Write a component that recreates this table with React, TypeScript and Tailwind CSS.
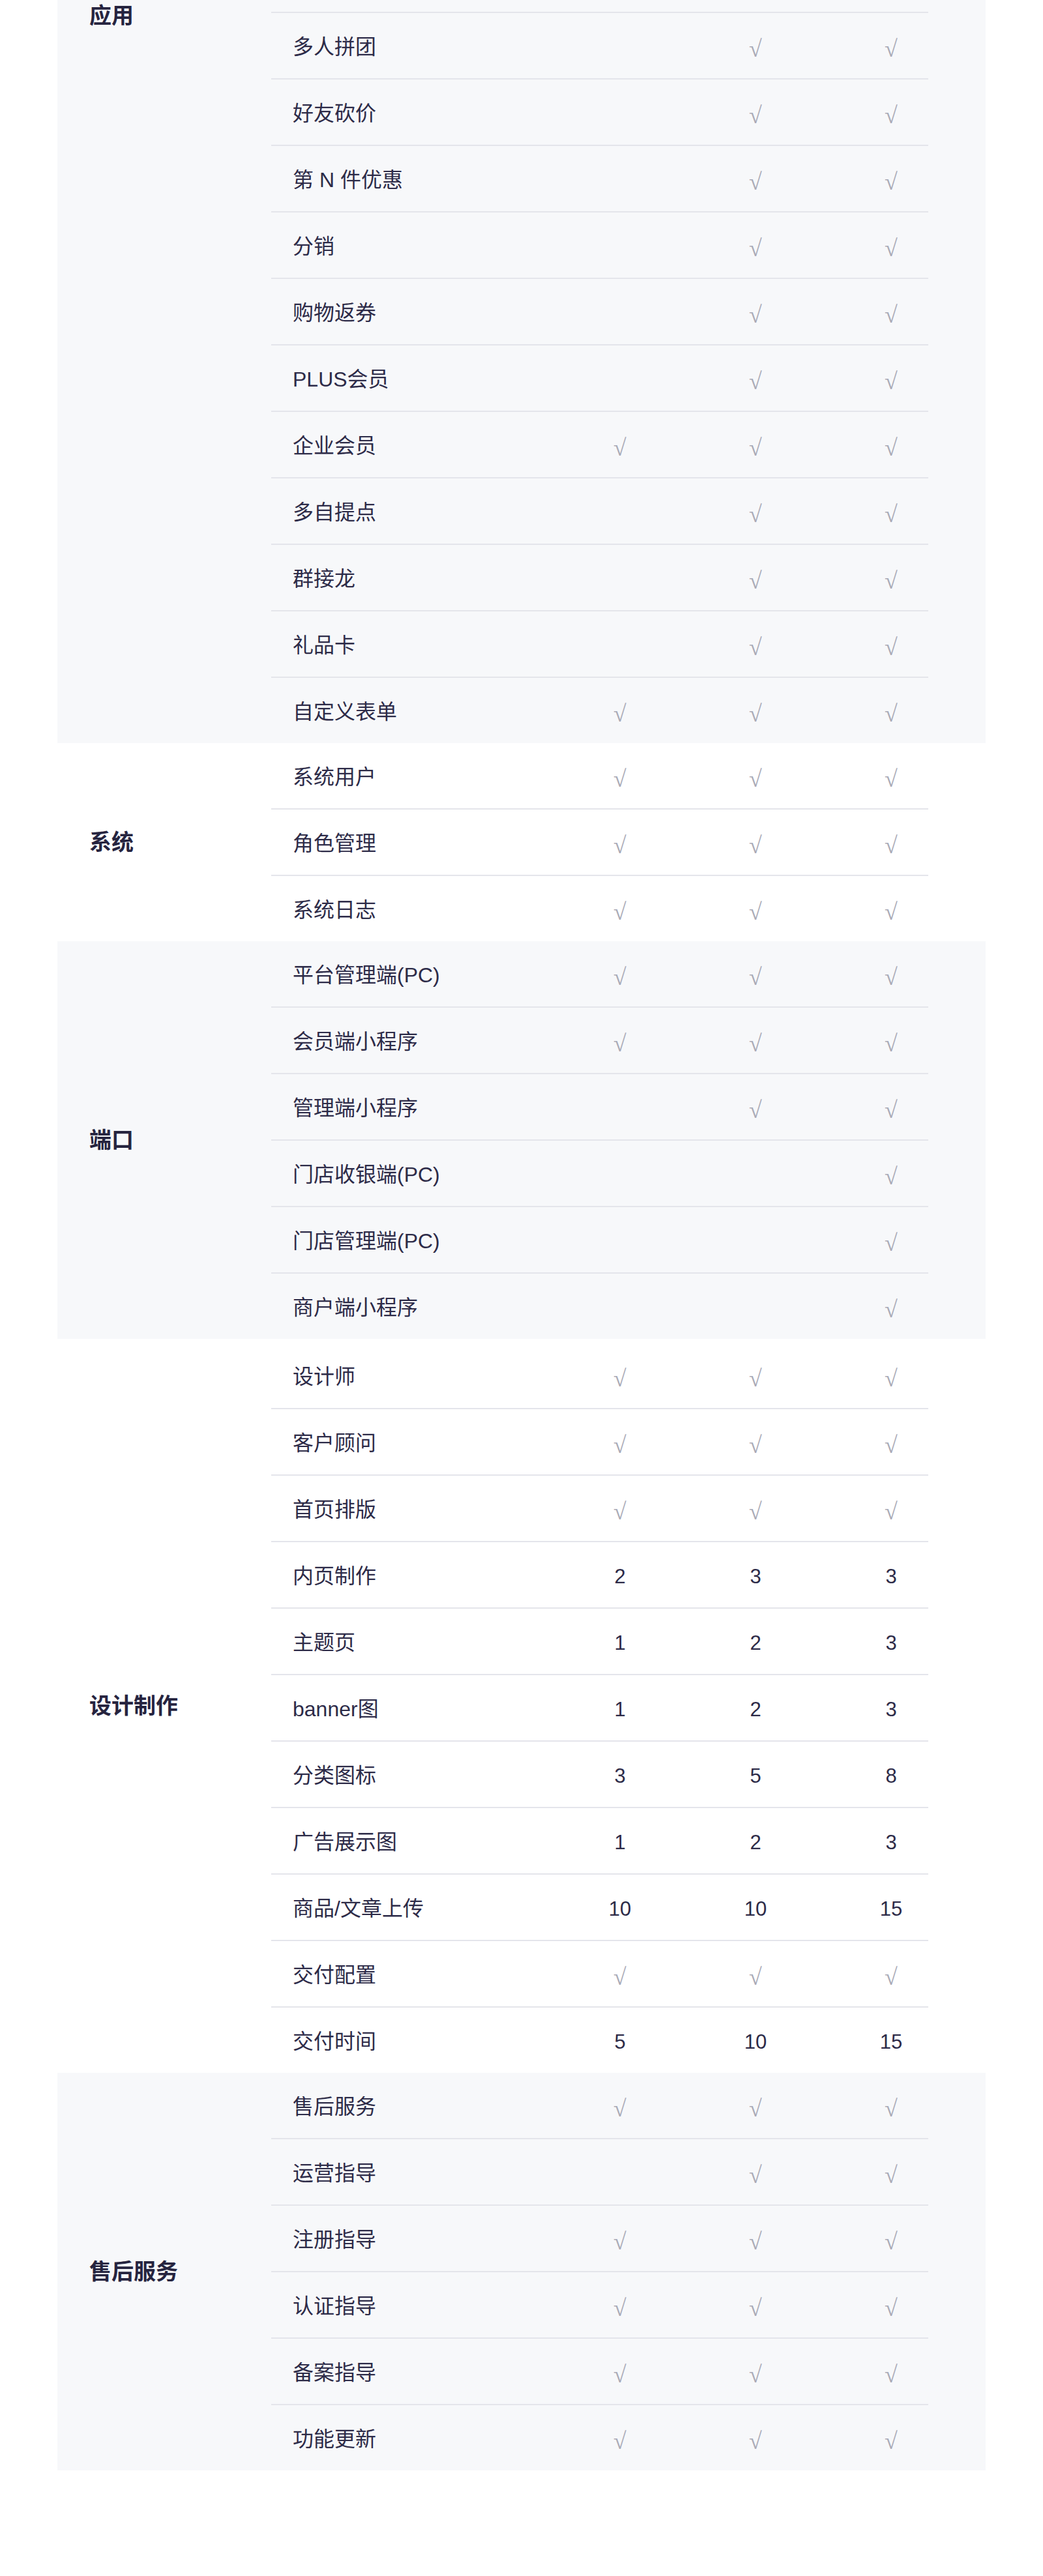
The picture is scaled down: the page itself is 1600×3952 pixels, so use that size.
import clsx from 'clsx';

type Row = { name: string; v: [string, string, string] };
type Group = { title: string; shaded: boolean; rows: Row[]; cut?: boolean; padTop?: boolean };

const Y = '√';
const N = '';

const groups: Group[] = [
  {
    title: '应用',
    shaded: true,
    cut: true,
    rows: [
      { name: '多人拼团', v: [N, Y, Y] },
      { name: '好友砍价', v: [N, Y, Y] },
      { name: '第 N 件优惠', v: [N, Y, Y] },
      { name: '分销', v: [N, Y, Y] },
      { name: '购物返券', v: [N, Y, Y] },
      { name: 'PLUS会员', v: [N, Y, Y] },
      { name: '企业会员', v: [Y, Y, Y] },
      { name: '多自提点', v: [N, Y, Y] },
      { name: '群接龙', v: [N, Y, Y] },
      { name: '礼品卡', v: [N, Y, Y] },
      { name: '自定义表单', v: [Y, Y, Y] },
    ],
  },
  {
    title: '系统',
    shaded: false,
    rows: [
      { name: '系统用户', v: [Y, Y, Y] },
      { name: '角色管理', v: [Y, Y, Y] },
      { name: '系统日志', v: [Y, Y, Y] },
    ],
  },
  {
    title: '端口',
    shaded: true,
    rows: [
      { name: '平台管理端(PC)', v: [Y, Y, Y] },
      { name: '会员端小程序', v: [Y, Y, Y] },
      { name: '管理端小程序', v: [N, Y, Y] },
      { name: '门店收银端(PC)', v: [N, N, Y] },
      { name: '门店管理端(PC)', v: [N, N, Y] },
      { name: '商户端小程序', v: [N, N, Y] },
    ],
  },
  {
    title: '设计制作',
    shaded: false,
    padTop: true,
    rows: [
      { name: '设计师', v: [Y, Y, Y] },
      { name: '客户顾问', v: [Y, Y, Y] },
      { name: '首页排版', v: [Y, Y, Y] },
      { name: '内页制作', v: ['2', '3', '3'] },
      { name: '主题页', v: ['1', '2', '3'] },
      { name: 'banner图', v: ['1', '2', '3'] },
      { name: '分类图标', v: ['3', '5', '8'] },
      { name: '广告展示图', v: ['1', '2', '3'] },
      { name: '商品/文章上传', v: ['10', '10', '15'] },
      { name: '交付配置', v: [Y, Y, Y] },
      { name: '交付时间', v: ['5', '10', '15'] },
    ],
  },
  {
    title: '售后服务',
    shaded: true,
    rows: [
      { name: '售后服务', v: [Y, Y, Y] },
      { name: '运营指导', v: [N, Y, Y] },
      { name: '注册指导', v: [Y, Y, Y] },
      { name: '认证指导', v: [Y, Y, Y] },
      { name: '备案指导', v: [Y, Y, Y] },
      { name: '功能更新', v: [Y, Y, Y] },
    ],
  },
];

function ValueCell({ value }: { value: string }) {
  if (value === Y) {
    return (
      <span className="pt-[10px] text-center font-['Liberation_Serif',serif] text-[36px] text-[#a9aab6]">
        {value}
      </span>
    );
  }
  return <span className="pt-[4px] text-center text-[31px] text-[#2d2b48]">{value}</span>;
}

function FeatureRow({ row }: { row: Row }) {
  return (
    <div className="grid grid-cols-[431px_208px_208px_208px] grid-rows-[100px] items-center">
      <span className="pl-[33px] pt-[4px] text-[32px] text-[#2d2b48]">{row.name}</span>
      {row.v.map((x, i) => (
        <ValueCell key={i} value={x} />
      ))}
    </div>
  );
}

function GroupBlock({ group }: { group: Group }) {
  return (
    <section className={clsx('flex', group.shaded ? 'bg-[#f7f8fa]' : 'bg-white')}>
      <div className={clsx('flex w-[328px] shrink-0 pl-[49px]', group.cut ? 'items-start pt-[4px]' : 'items-center')}>
        <h3 className="text-[34px] font-bold leading-[40px] text-[#26243f]">{group.title}</h3>
      </div>
      <div className={clsx('flex w-[1008px] flex-col divide-y-2 divide-[#e4e5eb]', group.padTop && 'pt-[6px]')}>
        {group.cut && <div className="h-[20px]" />}
        {group.rows.map((r) => (
          <FeatureRow key={r.name} row={r} />
        ))}
      </div>
    </section>
  );
}

export default function App() {
  return (
    <div className="min-h-[3952px] bg-white font-['Liberation_Sans','Noto_Sans_CJK_SC',sans-serif] leading-none">
      <div className="mx-auto w-[1424px]">
        {groups.map((g) => (
          <GroupBlock key={g.title} group={g} />
        ))}
      </div>
    </div>
  );
}
